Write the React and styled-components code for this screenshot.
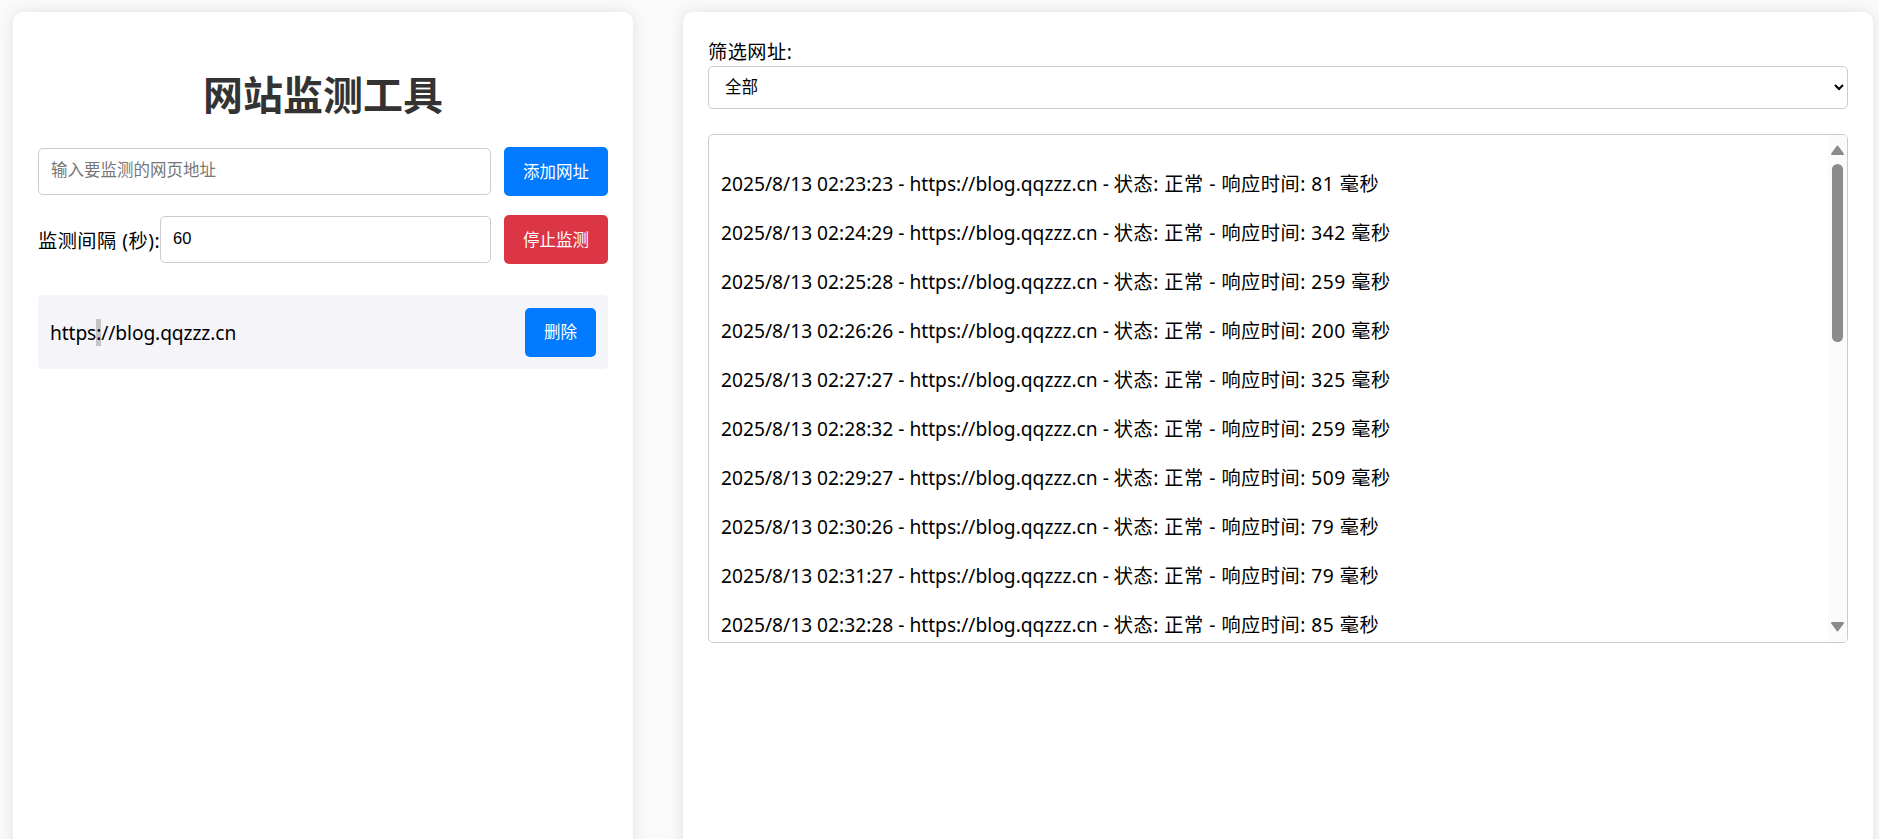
import React from "react";
import styled, { createGlobalStyle } from "styled-components";

const GlobalStyle = createGlobalStyle`
  * {
    box-sizing: border-box;
  }
  html, body {
    margin: 0;
    height: 100%;
    overflow: hidden;
  }
  body {
    background: #fafafa;
    color: #000;
    font-family: "Noto Sans", "Noto Sans CJK SC", sans-serif;
    font-size: 19.2px;
  }
`;

const Page = styled.div`
  display: flex;
  gap: 50px;
  height: calc(100vh + 30px);
  padding: 12px 6px 0 13px;
`;

const Card = styled.section`
  background: #fff;
  border-radius: 10px;
  box-shadow: 0 0 15px rgba(0, 0, 0, 0.1);
  padding: 25px;
  width: ${props => props.width}px;
  flex: none;
`;

const Title = styled.h1`
  margin: 35px 0 29px;
  color: #333;
  font-size: 40px;
  font-weight: 700;
  line-height: 46px;
  text-align: center;
`;

const Row = styled.div`
  display: flex;
  align-items: center;
  margin-bottom: 19px;
`;

const Label = styled.label`
  flex: none;
  letter-spacing: 0.5px;
  white-space: nowrap;
`;

const Input = styled.input`
  flex: 1;
  min-width: 0;
  height: 47px;
  margin-right: 13px;
  padding: 0 12px 2px;
  background: #fff;
  border: 1px solid #ccc;
  border-radius: 5px;
  color: #000;
  font-family: "Liberation Sans", "Noto Sans CJK SC", sans-serif;
  font-size: 16.5px;
  &::placeholder {
    color: #777;
  }
`;

const Button = styled.button`
  flex: none;
  width: ${props => props.width || 104}px;
  height: 49px;
  padding: 0 0 2px;
  background: ${props => (props.danger ? "#dc3545" : "#007bff")};
  border: 0;
  border-radius: 5px;
  color: #fff;
  font-family: "Noto Sans CJK SC", sans-serif;
  font-size: 16.5px;
`;

const UrlItem = styled.div`
  display: flex;
  align-items: center;
  justify-content: space-between;
  height: 74px;
  margin-top: 31px;
  padding: 0 12px;
  background: #f4f4f9;
  border-radius: 5px;
`;

const UrlText = styled.span`
  letter-spacing: -0.1px;
`;

const Picked = styled.span`
  background: #c4c4c4;
`;

const FilterLabel = styled.label`
  display: block;
  letter-spacing: 0.5px;
  line-height: 29px;
`;

const Select = styled.select`
  display: block;
  width: 100%;
  height: 43px;
  padding: 0 12px 2px;
  background: #fff;
  border: 1px solid #ccc;
  border-radius: 5px;
  color: #000;
  font-family: "Noto Sans", "Noto Sans CJK SC", sans-serif;
  font-size: 16.5px;
`;

const LogBox = styled.div`
  position: relative;
  height: 509px;
  margin-top: 25px;
  overflow: hidden;
  background: #fff;
  border: 1px solid #ccc;
  border-radius: 5px;
`;

const LogList = styled.div`
  padding: 35px 12px 0;
`;

const LogLine = styled.p`
  margin: 0 0 22px;
  line-height: 27px;
  white-space: nowrap;
`;

const Status = styled.span`
  letter-spacing: 0.5px;
`;

const ScrollTrack = styled.div`
  position: absolute;
  top: 0;
  right: 0;
  bottom: 0;
  display: flex;
  flex-direction: column;
  align-items: center;
  width: 19px;
  padding: 10px 0 10px;
  background: #fbfbfb;
`;

const ScrollThumb = styled.div`
  width: 11px;
  height: 178px;
  margin-top: 9px;
  background: #8b8b8b;
  border-radius: 6px;
`;

const ScrollArrow = styled.svg`
  display: block;
  flex: none;
  width: 13px;
  height: 10px;
  margin-top: ${props => (props.down ? "auto" : "0")};
  fill: #8b8b8b;
  stroke: #8b8b8b;
  stroke-width: 2;
  stroke-linejoin: round;
`;

const logs = [
  ["02:23:23", 81],
  ["02:24:29", 342],
  ["02:25:28", 259],
  ["02:26:26", 200],
  ["02:27:27", 325],
  ["02:28:32", 259],
  ["02:29:27", 509],
  ["02:30:26", 79],
  ["02:31:27", 79],
  ["02:32:28", 85],
];

export default function App() {
  return (
    <>
      <GlobalStyle />
      <Page>
        <Card width={620}>
          <Title>网站监测工具</Title>
          <Row>
            <Input placeholder="输入要监测的网页地址" />
            <Button>添加网址</Button>
          </Row>
          <Row>
            <Label>监测间隔 (秒):</Label>
            <Input type="text" defaultValue="60" />
            <Button danger>停止监测</Button>
          </Row>
          <UrlItem>
            <UrlText>
              https<Picked>:</Picked>//blog.qqzzz.cn
            </UrlText>
            <Button width={71}>删除</Button>
          </UrlItem>
        </Card>
        <Card width={1190}>
          <FilterLabel>筛选网址:</FilterLabel>
          <Select defaultValue="all">
            <option value="all">全部</option>
            <option value="blog">https://blog.qqzzz.cn</option>
          </Select>
          <LogBox>
            <LogList>
              {logs.map(([time, ms]) => (
                <LogLine key={time}>
                  2025/8/13 {time} - https://blog.qqzzz.cn - <Status>状态: 正常 - 响应时间: {ms} 毫秒</Status>
                </LogLine>
              ))}
            </LogList>
            <ScrollTrack>
              <ScrollArrow viewBox="0 0 13 10">
                <path d="M6.5 1.5 L12 9 L1 9 Z" />
              </ScrollArrow>
              <ScrollThumb />
              <ScrollArrow down viewBox="0 0 13 10">
                <path d="M1 1 L12 1 L6.5 8.5 Z" />
              </ScrollArrow>
            </ScrollTrack>
          </LogBox>
        </Card>
      </Page>
    </>
  );
}
